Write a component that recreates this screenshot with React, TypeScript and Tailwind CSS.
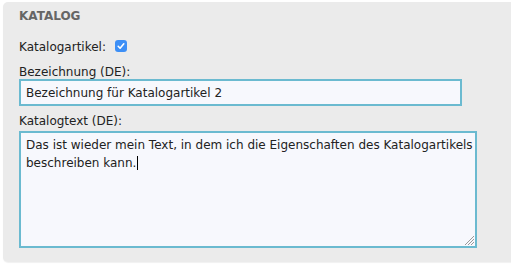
export default function App() {
  return (
    <div className="h-[267px] w-[511px] overflow-hidden bg-white font-['DejaVu_Sans',sans-serif] text-[12px] text-[#222]">
      <div className="ml-[3px] mt-[2px] flex h-[260px] w-[530px] flex-col rounded-l-[5px] bg-[#ebebeb] pl-4 pt-[7px] shadow-[0_1px_1px_rgba(0,0,0,0.06)]">
        <h2 className="text-[12px] font-bold leading-[14px] text-[#666]">KATALOG</h2>

        <div className="mt-[17px] flex h-[14px] items-start leading-[14px]">
          <span>Katalogartikel:</span>
          <span className="ml-[9px] flex h-3 w-3 items-center justify-center rounded-[3px] bg-[#3d8ff6]">
            <svg viewBox="0 0 12 12" className="h-3 w-3">
              <path d="M3.2 6.3 L5.1 8.2 L8.8 3.8" fill="none" stroke="white" strokeWidth="1.6" strokeLinecap="round" strokeLinejoin="round" />
            </svg>
          </span>
        </div>

        <label className="mt-3 block leading-[13px]">Bezeichnung (DE):</label>
        <div className="flex h-[27px] w-[443px] items-center border-2 border-[#6bbad0] bg-[#f7f8fd] px-[5px]">
          Bezeichnung für Katalogartikel 2
        </div>

        <label className="mt-2 block leading-[14px]">Katalogtext (DE):</label>
        <div className="relative mt-[3px] h-[117px] w-[458px] border-2 border-[#6bbad0] bg-[#f7f8fd] pl-[5px] pr-0 pt-[5px] leading-[15px]">
          Das ist wieder mein Text, in dem ich die Eigenschaften des Katalogartikels beschreiben kann.
          <span className="ml-px inline-block h-[14px] w-px translate-y-[3px] bg-black" />
          <svg viewBox="0 0 12 12" className="absolute bottom-0 right-0 h-3 w-3">
            <path d="M11 2 L2 11 M11 5 L5 11 M11 8 L8 11" stroke="#999" strokeWidth="1" />
          </svg>
        </div>
      </div>
    </div>
  );
}
